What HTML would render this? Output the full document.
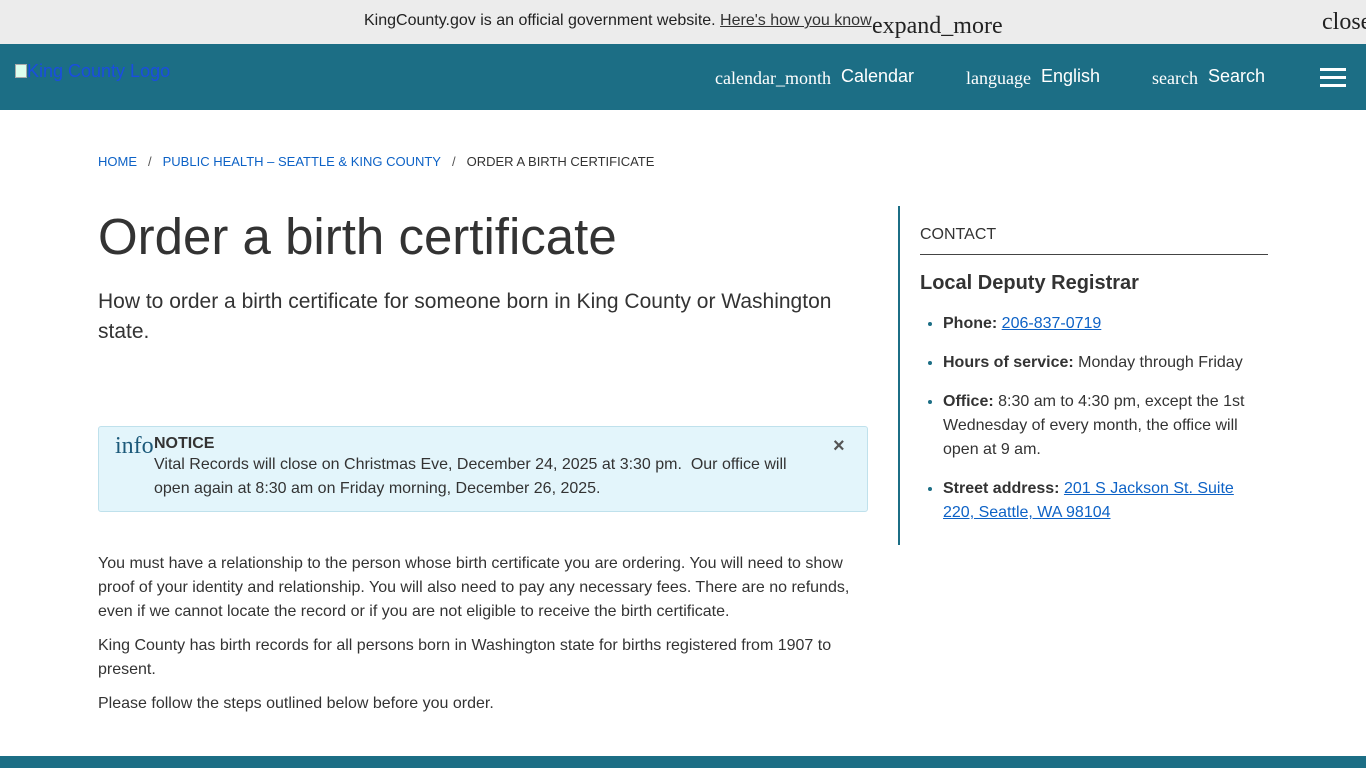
<!DOCTYPE html>
<html><head><meta charset="utf-8"><style>
*{box-sizing:border-box;margin:0;padding:0}
body{width:1366px;height:768px;overflow:hidden;font-family:"Liberation Sans",Arial,sans-serif;color:#333;background:#fff;position:relative}
.top{height:44px;background:#ececec;position:relative;font-size:16px}
.top .msg{position:absolute;left:364px;top:12px;color:#222}
.top .msg u{color:#333}
.top .em{font-family:"Liberation Serif",serif;font-size:24px;position:absolute;left:872px;top:13px;color:#222}
.top .cl{font-family:"Liberation Serif",serif;font-size:24px;position:absolute;left:1322px;top:9px;color:#222}
.hdr{height:66px;background:#1c6e85;position:relative;color:#fff}
.logo{position:absolute;left:15px;top:61px;color:#1a4de0;font-size:18px}
.logo i{display:inline-block;width:12px;height:14px;border:1px solid #aaa;background:#dfe;vertical-align:-1px}
.hdr .it{position:absolute;top:22px;font-size:18px}
.hdr .ic{font-family:"Liberation Serif",serif;font-size:18px;margin-right:10px;position:relative;top:2px}
.burger{position:absolute;left:1320px;top:68px;width:26px}
.burger i{display:block;height:3px;background:#fff;margin-bottom:5px}
.bc{position:absolute;left:98px;top:154px;font-size:13px;color:#333}
.bc a{color:#0d62c6;text-decoration:none}
.bc span.s{margin:0 11px;color:#555}
h1{position:absolute;left:98px;top:207px;font-size:51px;font-weight:400;color:#333}
.sub{position:absolute;left:98px;top:287px;width:770px;font-size:21px;line-height:30px;color:#333}
.notice{position:absolute;left:98px;top:426px;width:770px;height:86px;background:#e3f5fb;border:1px solid #bfe1ec;border-radius:3px}
.notice .i{position:absolute;left:16px;top:6px;font-family:"Liberation Serif",serif;font-size:24px;color:#1c5a7a}
.notice .t{position:absolute;left:55px;top:8px;font-size:16px;line-height:24px;color:#333}
.notice .x{position:absolute;left:734px;top:8px;font-size:20px;color:#555;font-weight:bold}
.body{position:absolute;left:98px;top:552px;width:760px;font-size:16px;line-height:24px;color:#333}
.body p{margin-bottom:10px}
.side{position:absolute;left:898px;top:206px;width:370px;height:339px;border-left:2px solid #1c6e85}
.side .c{position:absolute;left:20px;top:20px;font-size:16px;width:348px;border-bottom:1px solid #444;padding-bottom:10px}
.side h3{position:absolute;left:20px;top:66px;font-size:20px;color:#333}
.side ul{position:absolute;left:43px;top:106px;width:310px;font-size:16px;line-height:24px}
.side li{margin-bottom:15px}
.side li::marker{color:#1c6e85}
.side a{color:#0d62c6;text-decoration:underline}
.foot{position:absolute;left:0;top:756px;width:1366px;height:12px;background:#1c6e85}
</style></head><body>
<div class="top"><span class="msg">KingCounty.gov is an official government website. <u>Here's how you know</u></span><span class="em">expand_more</span><span class="cl">close</span></div>
<div class="hdr">
<span class="it" style="left:715px"><span class="ic">calendar_month</span>Calendar</span>
<span class="it" style="left:966px"><span class="ic">language</span>English</span>
<span class="it" style="left:1152px"><span class="ic">search</span>Search</span>
</div>
<div class="logo"><i></i>King County Logo</div>
<div class="burger"><i></i><i></i><i></i></div>
<div class="bc"><a>HOME</a><span class="s">/</span><a>PUBLIC HEALTH – SEATTLE &amp; KING COUNTY</a><span class="s">/</span>ORDER A BIRTH CERTIFICATE</div>
<h1>Order a birth certificate</h1>
<div class="sub">How to order a birth certificate for someone born in King County or Washington<br>state.</div>
<div class="notice"><span class="i">info</span><div class="t"><b style="display:block;line-height:18px">NOTICE</b>Vital Records will close on Christmas Eve, December 24, 2025 at 3:30 pm.&nbsp; Our office will<br>open again at 8:30 am on Friday morning, December 26, 2025.</div><span class="x">×</span></div>
<div class="body"><p>You must have a relationship to the person whose birth certificate you are ordering. You will need to show proof of your identity and relationship. You will also need to pay any necessary fees. There are no refunds, even if we cannot locate the record or if you are not eligible to receive the birth certificate.</p><p>King County has birth records for all persons born in Washington state for births registered from 1907 to present.</p><p>Please follow the steps outlined below before you order.</p></div>
<div class="side"><div class="c">CONTACT</div><h3>Local Deputy Registrar</h3>
<ul><li><b>Phone:</b> <a>206-837-0719</a></li><li><b>Hours of service:</b> Monday through Friday</li><li><b>Office:</b> 8:30 am to 4:30 pm, except the 1st Wednesday of every month, the office will open at 9 am.</li><li><b>Street address:</b> <a>201 S Jackson St. Suite 220, Seattle, WA 98104</a></li></ul></div>
<div class="foot"></div>
</body></html>
